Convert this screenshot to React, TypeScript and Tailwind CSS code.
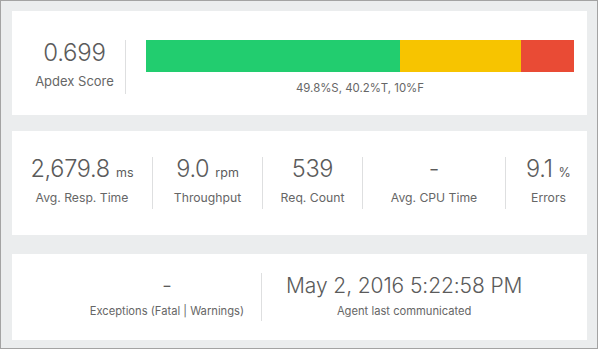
const METRICS = [
  { value: "2,679.8", unit: "ms", label: "Avg. Resp. Time", width: "w-[140px]" },
  { value: "9.0", unit: "rpm", label: "Throughput", width: "w-[109px]" },
  { value: "539", unit: "", label: "Req. Count", width: "w-[99px]" },
  { value: "-", unit: "", label: "Avg. CPU Time", width: "w-[142px]" },
  { value: "9.1", unit: "%", label: "Errors", width: "w-[85px]" },
];

function Divider({ h }: { h: string }) {
  return <div className={`w-px bg-[#dedfe0] ${h}`} />;
}

export default function App() {
  return (
    <div
      className="w-[598px] h-[349px] border border-[#a3a3a3] bg-[#ebedee] pl-[11px] pt-[10px] flex flex-col text-[#5b5b5b]"
      style={{ fontFamily: "Inter, 'Open Sans', sans-serif" }}
    >
      {/* Apdex */}
      <div className="w-[575px] h-[104px] bg-white flex items-start pt-[29px]">
        <div className="w-[113px] pl-[12px] pt-[1px] flex flex-col items-center">
          <div className="text-[24px] leading-none font-light tracking-[-0.2px]">0.699</div>
          <div className="text-[13px] mt-[7px] text-[#666]">Apdex Score</div>
        </div>
        <Divider h="h-[54px]" />
        <div className="ml-[20px] w-[428px] flex flex-col items-center">
          <div className="w-full h-[32px] flex">
            <div className="w-[254px] bg-[#22cd6f]" />
            <div className="w-[121px] bg-[#f7c400]" />
            <div className="flex-1 bg-[#e94b35]" />
          </div>
          <div className="text-[11.4px] mt-[8px] text-[#666]">49.8%S, 40.2%T, 10%F</div>
        </div>
      </div>

      {/* Metrics */}
      <div className="w-[575px] h-[104px] bg-white mt-[16px] flex items-center">
        {METRICS.map((m, i) => (
          <div key={m.label} className="flex items-center">
            {i > 0 && <Divider h="h-[52px]" />}
            <div className={`${m.width} flex flex-col items-center mt-[-2px]`}>
              <div className="flex items-baseline gap-[6px] leading-none">
                <span className="text-[23.5px] font-light tracking-[-0.3px]">{m.value}</span>
                {m.unit && <span className="text-[12.5px]">{m.unit}</span>}
              </div>
              <div className="text-[12.2px] mt-[9px] text-[#666]">{m.label}</div>
            </div>
          </div>
        ))}
      </div>

      {/* Exceptions / agent */}
      <div className="w-[575px] h-[86px] bg-white mt-[19px] pl-[20px] flex items-center justify-center">
        <div className="flex flex-col items-center px-[17px]">
          <div className="text-[22px] leading-none font-light">-</div>
          <div className="text-[11.2px] mt-[7px] text-[#666]">Exceptions (Fatal | Warnings)</div>
        </div>
        <Divider h="h-[48px]" />
        <div className="flex flex-col items-center px-[24px]">
          <div className="text-[21px] leading-none font-light tracking-[-0.1px]">May 2, 2016 5:22:58 PM</div>
          <div className="text-[11.2px] mt-[7px] text-[#666]">Agent last communicated</div>
        </div>
      </div>
    </div>
  );
}
